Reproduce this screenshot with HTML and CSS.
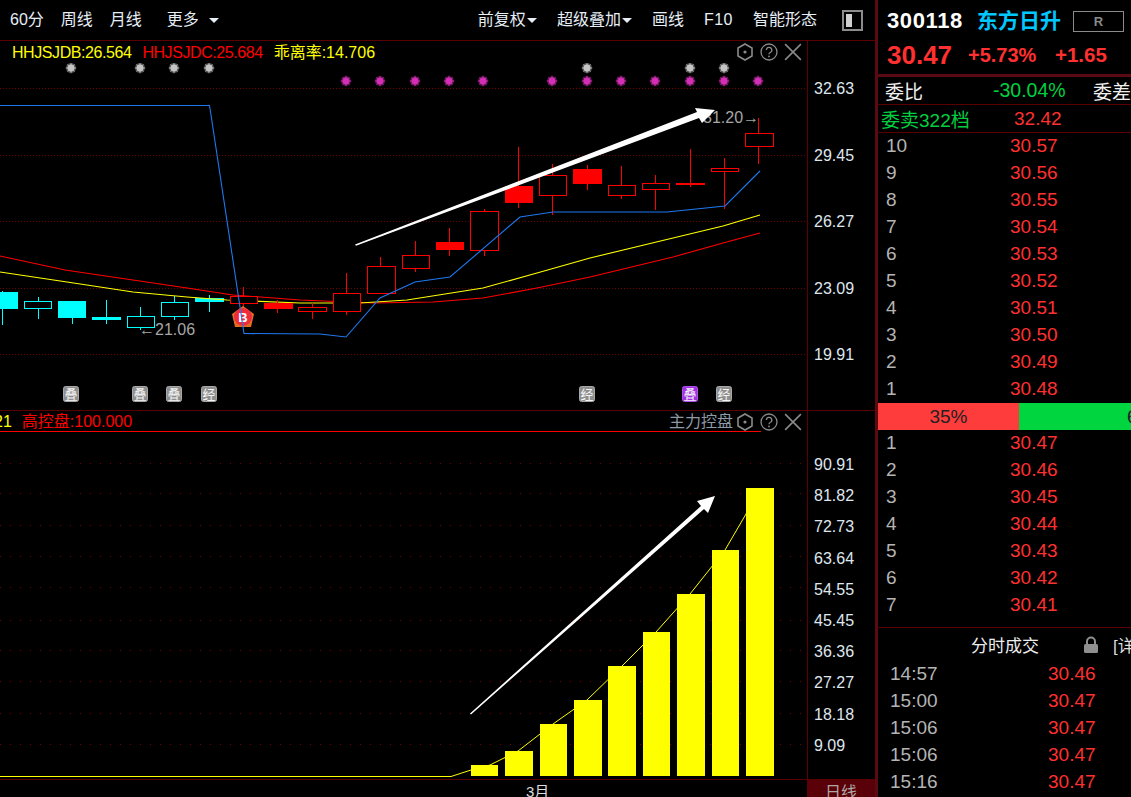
FILE: index.html
```html
<!DOCTYPE html>
<html lang="zh-CN">
<head>
<meta charset="utf-8">
<title>东方日升 K线</title>
<link rel="stylesheet" href="styles.css">
</head>
<body>
<svg class="defs" width="0" height="0" aria-hidden="true">
  <defs>
    <symbol id="star" viewBox="-6 -6 12 12">
      <circle r="5.2" opacity=".3"/>
      <polygon points="0,-5.8 1.5,-3 4.1,-4.1 3,-1.500 5.8,0 3,1.500 4.1,4.1 1.500,3 0,5.8 -1.500,3 -4.1,4.1 -3,1.500 -5.8,0 -3,-1.500 -4.1,-4.1 -1.500,-3" opacity=".6"/>
      <circle r="3.4"/>
    </symbol>
    <symbol id="i-hex" viewBox="0 0 18 18">
      <polygon points="9,1 16,5 16,13 9,17 2,13 2,5" fill="none" stroke="#8a8a8a" stroke-width="1.6"/>
      <circle cx="9" cy="9" r="1.6" fill="#8a8a8a"/>
    </symbol>
    <symbol id="i-help" viewBox="0 0 18 18">
      <circle cx="9" cy="9" r="8" fill="none" stroke="#8a8a8a" stroke-width="1.3"/>
      <path d="M6.4 7a2.7 2.7 0 1 1 3.8 2.5c-.8.4-1.2.9-1.2 1.8" fill="none" stroke="#8a8a8a" stroke-width="1.3"/>
      <circle cx="9" cy="13.4" r=".9" fill="#8a8a8a"/>
    </symbol>
    <symbol id="i-close" viewBox="0 0 16 16">
      <path d="M1 1 15 15M15 1 1 15" fill="none" stroke="#8a8a8a" stroke-width="1.4"/>
    </symbol>
  </defs>
</svg>

<div class="app">
  <main class="main">
    <nav class="toolbar">
      <div class="tool-group tool-left">
        <span>60分</span><span>周线</span><span class="gap-more">月线</span>
        <span class="with-caret wide-caret">更多<i class="caret"></i></span>
      </div>
      <div class="tool-group tool-right">
        <span class="with-caret">前复权<i class="caret"></i></span>
        <span class="with-caret">超级叠加<i class="caret"></i></span>
        <span>画线</span><span class="f10">F10</span><span>智能形态</span>
        <i class="layout-icon"><b></b></i>
      </div>
    </nav>

    <section class="panel panel-top">
      <div class="plot">
        <header class="plot-head head-top">
          <div class="legend">
            <span class="yellow latin">HHJSJDB:26.564</span>
            <span class="red latin">HHJSJDC:25.684</span>
            <span class="yellow">乖离率:14.706</span>
          </div>
          <div class="head-tools">
            <svg class="ico"><use href="#i-hex"/></svg>
            <svg class="ico"><use href="#i-help"/></svg>
            <svg class="ico"><use href="#i-close"/></svg>
          </div>
        </header>
        <svg class="chart chart-top" viewBox="0 63 807 347" width="807" height="347">
          <g class="grid">
            <line x1="0" x2="806" y1="88.5" y2="88.5"/>
            <line x1="0" x2="806" y1="155.5" y2="155.5"/>
            <line x1="0" x2="806" y1="221.5" y2="221.5"/>
            <line x1="0" x2="806" y1="288.5" y2="288.5"/>
            <line x1="0" x2="806" y1="354.5" y2="354.5"/>
          </g>
          <g class="stars-gray">
            <use href="#star" x="65" y="62" width="12" height="12"/>
            <use href="#star" x="134" y="62" width="12" height="12"/>
            <use href="#star" x="168" y="62" width="12" height="12"/>
            <use href="#star" x="203" y="62" width="12" height="12"/>
            <use href="#star" x="581" y="62" width="12" height="12"/>
            <use href="#star" x="684" y="62" width="12" height="12"/>
            <use href="#star" x="718" y="62" width="12" height="12"/>
          </g>
          <g class="stars-pink">
            <use href="#star" x="340" y="75" width="12" height="12"/>
            <use href="#star" x="374" y="75" width="12" height="12"/>
            <use href="#star" x="409" y="75" width="12" height="12"/>
            <use href="#star" x="443" y="75" width="12" height="12"/>
            <use href="#star" x="477" y="75" width="12" height="12"/>
            <use href="#star" x="546" y="75" width="12" height="12"/>
            <use href="#star" x="581" y="75" width="12" height="12"/>
            <use href="#star" x="615" y="75" width="12" height="12"/>
            <use href="#star" x="649" y="75" width="12" height="12"/>
            <use href="#star" x="684" y="75" width="12" height="12"/>
            <use href="#star" x="718" y="75" width="12" height="12"/>
            <use href="#star" x="752" y="75" width="12" height="12"/>
          </g>
          <g class="wick cyan-w">
            <line x1="2.5" x2="2.5" y1="291" y2="325"/>
            <line x1="38.5" x2="38.5" y1="297" y2="319"/>
            <line x1="72.5" x2="72.5" y1="301" y2="324"/>
            <line x1="106.5" x2="106.5" y1="300" y2="324"/>
            <line x1="140.5" x2="140.5" y1="307" y2="330"/>
            <line x1="174.5" x2="174.5" y1="296" y2="320"/>
            <line x1="209.5" x2="209.5" y1="295" y2="312"/>
          </g>
          <g class="body cyan-b">
            <rect class="solid" x="-2" y="292" width="20" height="17"/>
            <rect x="24.5" y="301.5" width="27" height="7"/>
            <rect class="solid" x="58" y="301" width="28" height="17"/>
            <rect class="solid" x="92" y="317" width="29" height="3"/>
            <rect x="127.5" y="316.5" width="27" height="11"/>
            <rect x="161.5" y="302.5" width="27" height="14"/>
            <rect class="solid" x="195" y="298" width="29" height="4"/>
          </g>
          <polyline class="ma ma-red" points="0,256 65,270 133,280 187,288 233,295 300,300 373,303 433,302 483,298 537,288 590,277 673,257 723,243 760,233"/>
          <polyline class="ma ma-yellow" points="0,272 67,282 133,292 187,297 227,300 300,303 360,303 407,300 483,288 537,273 590,258 673,238 723,226 760,215"/>
          <g class="wick red-w">
            <line x1="243.5" x2="243.5" y1="287" y2="310"/>
            <line x1="277.5" x2="277.5" y1="300" y2="313"/>
            <line x1="312.5" x2="312.5" y1="303" y2="319"/>
            <line x1="346.5" x2="346.5" y1="273" y2="315"/>
            <line x1="380.5" x2="380.5" y1="257" y2="293"/>
            <line x1="415.5" x2="415.5" y1="241" y2="272"/>
            <line x1="449.5" x2="449.5" y1="228" y2="256"/>
            <line x1="484.5" x2="484.5" y1="209" y2="256"/>
            <line x1="518.5" x2="518.5" y1="147" y2="208"/>
            <line x1="552.5" x2="552.5" y1="164" y2="215"/>
            <line x1="587.5" x2="587.5" y1="165" y2="190"/>
            <line x1="621.5" x2="621.5" y1="166" y2="199"/>
            <line x1="655.5" x2="655.5" y1="175" y2="210"/>
            <line x1="690.5" x2="690.5" y1="149" y2="187"/>
            <line x1="724.5" x2="724.5" y1="158" y2="209"/>
            <line x1="758.5" x2="758.5" y1="118" y2="164"/>
          </g>
          <g class="body red-b">
            <rect x="230.5" y="296.5" width="27" height="7"/>
            <rect class="solid" x="264" y="303" width="29" height="6"/>
            <rect x="298.5" y="307.5" width="28" height="4"/>
            <rect x="333.5" y="293.5" width="27" height="18"/>
            <rect x="367.5" y="266.5" width="28" height="27"/>
            <rect x="402.5" y="255.5" width="27" height="13"/>
            <rect class="solid" x="436" y="242" width="28" height="8"/>
            <rect x="470.5" y="211.5" width="28" height="39"/>
            <rect class="solid" x="505" y="186" width="28" height="17"/>
            <rect x="539.5" y="175.5" width="27" height="20"/>
            <rect class="solid" x="573" y="169" width="29" height="15"/>
            <rect x="608.5" y="185.5" width="27" height="10"/>
            <rect x="642.5" y="183.5" width="27" height="6"/>
            <rect class="solid" x="676" y="183" width="29" height="2"/>
            <rect x="711.5" y="168.5" width="27" height="3"/>
            <rect x="745.5" y="133.5" width="28" height="13"/>
          </g>
          <g class="signal">
            <polygon class="sig-base" points="243,306 254,314 251,327 235,327 232,314"/>
            <circle class="sig-dot" cx="243" cy="317" r="9"/>
            <text class="sig-text" x="243" y="322">B</text>
          </g>
          <polyline class="ma ma-blue" points="0,105.5 209.5,105.5 211,115 244,333.5 320,334 346,337 380,298 415,282 450,277 520,217 553,212 667,212 725,206 760,171"/>
          <text class="note" x="139" y="335">←21.06</text>
          <text class="note" x="703" y="123">31.20→</text>
          <polygon class="arrow" points="355,244.6 697,112 695,108 715,110 702,123 699,118 356,245.8"/>
          <g class="tags">
            <rect x="63.5" y="386.5" width="15" height="15" rx="2"/><text x="71" y="399">叠</text>
            <rect x="132.5" y="386.5" width="15" height="15" rx="2"/><text x="140" y="399">叠</text>
            <rect x="166.5" y="386.5" width="15" height="15" rx="2"/><text x="174" y="399">叠</text>
            <rect x="201.5" y="386.5" width="15" height="15" rx="2"/><text x="209" y="399">经</text>
            <rect x="579.5" y="386.5" width="15" height="15" rx="2"/><text x="587" y="399">经</text>
            <rect class="tag-purple" x="682.5" y="386.5" width="15" height="15" rx="2"/><text x="690" y="399">叠</text>
            <rect x="716.5" y="386.5" width="15" height="15" rx="2"/><text x="724" y="399">经</text>
          </g>
        </svg>
      </div>
      <div class="axis axis-top">
        <span>32.63</span><span>29.45</span><span>26.27</span><span>23.09</span><span>19.91</span>
      </div>
    </section>

    <section class="panel panel-bottom">
      <div class="plot">
        <header class="plot-head head-bottom">
          <div class="legend">
            <span class="yellow clipped">21</span>
            <span class="red">高控盘:100.000</span>
          </div>
          <div class="head-tools">
            <span class="head-name">主力控盘</span>
            <svg class="ico"><use href="#i-hex"/></svg>
            <svg class="ico"><use href="#i-help"/></svg>
            <svg class="ico"><use href="#i-close"/></svg>
          </div>
        </header>
        <svg class="chart chart-bottom" viewBox="0 432 807 347" width="807" height="347">
          <g class="grid grid-sparse">
            <line x1="0" x2="806" y1="463.5" y2="463.5"/>
            <line x1="0" x2="806" y1="493.5" y2="493.5"/>
            <line x1="0" x2="806" y1="525.5" y2="525.5"/>
            <line x1="0" x2="806" y1="556.5" y2="556.5"/>
            <line x1="0" x2="806" y1="587.5" y2="587.5"/>
            <line x1="0" x2="806" y1="620.5" y2="620.5"/>
            <line x1="0" x2="806" y1="650.5" y2="650.5"/>
            <line x1="0" x2="806" y1="681.5" y2="681.5"/>
            <line x1="0" x2="806" y1="713.5" y2="713.5"/>
            <line x1="0" x2="806" y1="744.5" y2="744.5"/>
          </g>
          <polyline class="thin-yellow" points="0,776.5 451,776.5 471,770 490,765 518,751 553,724 587,700 622,666 656,632 690,594 725,550 746,514 760,488"/>
          <g class="bars">
            <rect x="471" y="765" width="27" height="11"/>
            <rect x="505" y="751" width="28" height="25"/>
            <rect x="540" y="724" width="27" height="52"/>
            <rect x="574" y="700" width="28" height="76"/>
            <rect x="608" y="666" width="28" height="110"/>
            <rect x="643" y="632" width="27" height="144"/>
            <rect x="677" y="594" width="28" height="182"/>
            <rect x="712" y="550" width="27" height="226"/>
            <rect x="746" y="488" width="28" height="288"/>
          </g>
          <polygon class="arrow" points="470,713.5 701,506 697,501 715,496 708,513 704,509 471,714.5"/>
        </svg>
      </div>
      <div class="axis axis-bottom">
        <span>90.91</span><span>81.82</span><span>72.73</span><span>63.64</span><span>54.55</span>
        <span>45.45</span><span>36.36</span><span>27.27</span><span>18.18</span><span>9.09</span>
      </div>
    </section>

    <footer class="timeline">
      <div class="months"><span>3月</span></div>
      <div class="period">日线</div>
    </footer>
  </main>

  <aside class="side">
    <div class="quote">
      <div class="quote-title">
        <span class="code">300118</span>
        <span class="name">东方日升</span>
        <span class="r-box">R</span>
      </div>
      <div class="quote-price">
        <span class="price">30.47</span>
        <span class="pct">+5.73%</span>
        <span class="chg">+1.65</span>
      </div>
    </div>
    <div class="ratio">
      <span class="ratio-label">委比</span>
      <span class="ratio-val">-30.04%</span>
      <span class="ratio-diff">委差</span>
    </div>
    <div class="sell-sum">
      <span class="sum-label">委卖322档</span>
      <span class="sum-val">32.42</span>
    </div>
    <ul class="book">
      <li><span>10</span><b>30.57</b></li>
      <li><span>9</span><b>30.56</b></li>
      <li><span>8</span><b>30.55</b></li>
      <li><span>7</span><b>30.54</b></li>
      <li><span>6</span><b>30.53</b></li>
      <li><span>5</span><b>30.52</b></li>
      <li><span>4</span><b>30.51</b></li>
      <li><span>3</span><b>30.50</b></li>
      <li><span>2</span><b>30.49</b></li>
      <li><span>1</span><b>30.48</b></li>
    </ul>
    <div class="balance">
      <div class="bal-red">35%</div>
      <div class="bal-green">65%</div>
    </div>
    <ul class="book">
      <li><span>1</span><b>30.47</b></li>
      <li><span>2</span><b>30.46</b></li>
      <li><span>3</span><b>30.45</b></li>
      <li><span>4</span><b>30.44</b></li>
      <li><span>5</span><b>30.43</b></li>
      <li><span>6</span><b>30.42</b></li>
      <li><span>7</span><b>30.41</b></li>
    </ul>
    <div class="trades">
      <div class="trades-head">
        <span class="trades-title">分时成交</span>
        <svg class="lock" viewBox="0 0 16 18" width="16" height="18"><path d="M4 8V5.500a4 4 0 0 1 8 0V8" fill="none" stroke="#8f8f8f" stroke-width="2"/><rect x="1" y="8" width="14" height="9" rx="1.500" fill="#8f8f8f"/></svg>
        <span class="trades-more">[详细]</span>
      </div>
      <ul class="trade-list">
        <li><span>14:57</span><b>30.46</b></li>
        <li><span>15:00</span><b>30.47</b></li>
        <li><span>15:06</span><b>30.47</b></li>
        <li><span>15:06</span><b>30.47</b></li>
        <li><span>15:16</span><b>30.47</b></li>
      </ul>
    </div>
  </aside>
</div>
</body>
</html>
```

FILE: styles.css
```css
* { box-sizing: border-box; }
html, body { margin: 0; padding: 0; background: #000; overflow: hidden; }
body {
  width: 1131px;
  height: 797px;
  font-family: "Liberation Sans", "Noto Sans CJK SC", sans-serif;
  color: #ddd;
}
ul { list-style: none; margin: 0; padding: 0; }
.defs { position: absolute; }
.app { display: flex; width: 1131px; height: 797px; overflow: hidden; }

/* main column */
.main { flex: 0 0 878px; width: 878px; display: flex; flex-direction: column; border-right: 3px solid #5c0a12; }

.toolbar {
  flex: 0 0 41px;
  display: flex;
  justify-content: space-between;
  align-items: center;
  border-bottom: 1px solid #5a0000;
  font-size: 16px;
  line-height: 22px;
  color: #e6eef6;
}
.tool-group { display: flex; align-items: center; }
.tool-left { padding-left: 10px; gap: 17px; }
.gap-more { margin-right: 8px; }
.tool-right { gap: 20px; padding-right: 12px; }
.f10 { letter-spacing: .5px; }
.with-caret { display: inline-flex; align-items: center; gap: 1px; }
.wide-caret { gap: 10px; }
.caret { width: 0; height: 0; border-left: 5px solid transparent; border-right: 5px solid transparent; border-top: 5px solid #e6eef6; }
.layout-icon { width: 21px; height: 21px; margin-left: 5px; border: 2px solid #8c8c8c; display: flex; padding: 2px; }
.layout-icon b { width: 6px; background: #d0d0d0; }

.panel { display: flex; min-height: 0; }
.panel-top { flex: 0 0 370px; border-bottom: 1px solid #5a0000; }
.panel-bottom { flex: 0 0 369px; border-bottom: 1px solid #5a0000; }
.plot { flex: 0 0 807px; width: 807px; display: flex; flex-direction: column; }
.axis { flex: 1; border-left: 1px solid #5a0000; display: flex; flex-direction: column; font-size: 16px; color: #dfe6ee; padding-left: 6px; }
.axis-top { padding-top: 38px; }
.axis-top span { flex: 0 0 66.5px; line-height: 20px; }
.axis-bottom { padding-top: 44px; }
.axis-bottom span { flex: 0 0 31.2px; line-height: 20px; }

.plot-head { display: flex; justify-content: space-between; align-items: center; font-size: 16px; line-height: 20px; padding-right: 5px; }
.head-top { flex: 0 0 22px; height: 22px; padding-left: 12px; }
.head-bottom { flex: 0 0 21px; height: 21px; padding-top: 2px; border-bottom: 1px solid #f00; width: 761px; }
.legend { display: flex; gap: 11px; white-space: nowrap; }
.head-top .legend { padding-top: 1px; }
.head-bottom .legend { gap: 10px; }
.latin { letter-spacing: -.43px; }
.clipped { margin-left: -6px; }
.yellow { color: #ff0; }
.red { color: #f00; }
.head-tools { display: flex; align-items: center; gap: 6px; }
.head-bottom .head-tools { margin-right: -46px; }
.head-name { color: #8d9aa5; margin-right: -3px; }
.ico { width: 18px; height: 18px; flex: none; }

.chart { display: block; flex: none; }
.grid line { stroke: #6a0000; stroke-width: 1; stroke-dasharray: 1 2; }
.grid-sparse line { stroke-dasharray: 1 9; stroke: #7a0000; }
.stars-gray { fill: #c4c4c4; }
.stars-pink { fill: #d22fb4; }
.wick line { stroke-width: 1; shape-rendering: crispEdges; }
.cyan-w line { stroke: #0ff; }
.red-w line { stroke: #f00; }
.body rect { fill: #000; stroke-width: 1; shape-rendering: crispEdges; }
.cyan-b rect { stroke: #0ff; }
.red-b rect { stroke: #f00; }
.cyan-b rect.solid { fill: #0ff; stroke: none; }
.red-b rect.solid { fill: #f00; stroke: none; }
.ma { fill: none; stroke-width: 1.1; }
.ma-red { stroke: #f00; }
.ma-yellow { stroke: #ff0; }
.ma-blue { stroke: #1e78f0; stroke-width: 1.1; }
.note { font-size: 16px; fill: #a6a6a6; }
.arrow { fill: #fff; }
.sig-base { fill: #e07020; }
.sig-dot { fill: #f02c3c; }
.sig-text { fill: #fff; font-size: 13px; font-weight: 700; text-anchor: middle; }
.tags rect { fill: #8e8e8e; stroke: #a8a8a8; stroke-width: 1; }
.tags rect.tag-purple { fill: #a030e0; stroke: #b050f0; }
.tags text { fill: #f4f4f4; font-size: 13px; text-anchor: middle; }
.thin-yellow { fill: none; stroke: #ff0; stroke-width: 1; }
.bars rect { fill: #ff0; }

.timeline { flex: 1; display: flex; overflow: hidden; }
.months { flex: 0 0 807px; font-size: 15px; color: #ddd; padding-left: 526px; line-height: 24px; }
.period { flex: 1; background: #5a0009; color: #b0a6a6; font-size: 16px; text-align: center; line-height: 26px; }

/* side column */
.side { flex: 1; min-width: 0; overflow: hidden; white-space: nowrap; }
.side span, .side b, .side svg { flex: none; }
.quote { height: 77px; border-bottom: 3px solid #5a0a12; }
.quote-title { display: flex; align-items: center; height: 37px; padding: 5px 0 0 9px; }
.code { font-size: 22px; font-weight: 700; color: #fff; letter-spacing: .6px; width: 90px; }
.name { font-size: 21px; font-weight: 700; color: #00c8ff; width: 96px; line-height: 24px; }
.r-box { width: 51px; height: 21px; border: 1px solid #8a8a8a; color: #8a8a8a; font-size: 13px; font-weight: 700; text-align: center; line-height: 19px; }
.quote-price { display: flex; align-items: center; height: 36px; padding-left: 9px; color: #ff3030; font-weight: 700; }
.price { font-size: 26px; width: 81px; }
.pct { font-size: 20px; width: 87px; }
.chg { font-size: 20.5px; }
.ratio { display: flex; align-items: center; height: 28px; font-size: 19px; border-bottom: 1px solid #5a0000; padding: 0 0 1px 7px; }
.ratio-label { width: 108px; color: #f0f0f0; }
.ratio-val { width: 100px; color: #00d040; font-size: 19.5px; }
.ratio-diff { color: #f0f0f0; }
.sell-sum { display: flex; align-items: center; height: 28px; font-size: 19px; border-bottom: 1px solid #5a0000; padding-left: 3px; }
.sum-label { width: 133px; color: #00d040; }
.sum-val { color: #ff3030; }
.book li { display: flex; align-items: center; height: 27px; font-size: 19px; padding: 0 0 2px 8px; }
.book span { width: 124px; color: #b4b4b4; }
.book b { font-weight: 400; color: #ff3030; }
.balance { display: flex; height: 27px; margin: 0; font-size: 19px; color: #222; }
.bal-red { flex: 0 0 141px; background: #ff3c3c; text-align: center; line-height: 27px; }
.bal-green { flex: 0 0 140px; background: #00d43f; line-height: 27px; padding-left: 108px; }
.trades { border-top: 1px solid #5a0000; margin-top: 8px; }
.trades-head { display: flex; align-items: center; height: 33px; font-size: 17px; color: #eee; padding-left: 93px; }
.trades-title { width: 112px; }
.lock { margin-right: 14px; }
.trades-more { color: #ddd; }
.trade-list li { display: flex; align-items: center; height: 27px; font-size: 19px; padding: 0 0 2px 12px; }
.trade-list span { width: 158px; color: #b4b4b4; }
.trade-list b { font-weight: 400; color: #ff3030; }
```
